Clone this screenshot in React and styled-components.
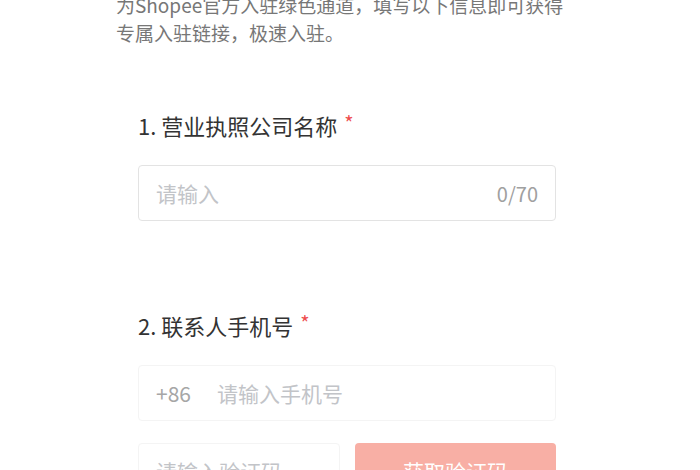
import React, { useState } from 'react';
import styled, { createGlobalStyle } from 'styled-components';

const GlobalStyle = createGlobalStyle`
  html, body {
    margin: 0;
    padding: 0;
    background: #fff;
    font-family: "Noto Sans CJK SC", "Noto Sans", sans-serif;
  }
`;

const Page = styled.div`
  width: 700px;
  height: 470px;
  overflow: hidden;
  padding-left: 116px;
  box-sizing: border-box;
`;

const Intro = styled.div`
  margin-top: -9px;
  font-size: 19px;
  line-height: 28px;
  color: #777;
  white-space: nowrap;
`;

const Form = styled.div`
  margin-top: 63px;
  margin-left: 22px;
  width: 418px;
  display: flex;
  flex-direction: column;
`;

const Field = styled.div`
  display: flex;
  flex-direction: column;
  gap: 25px;
  margin-bottom: ${({ $gap }) => $gap || 0}px;
`;

const Label = styled.div`
  font-size: 22px;
  line-height: 30px;
  color: #333;
  display: flex;
  align-items: center;
  gap: 7px;
`;

const Star = styled.span`
  color: #ee4d4d;
  font-size: 20px;
  line-height: 1;
  margin-top: -4px;
`;

const Box = styled.div`
  height: 56px;
  box-sizing: border-box;
  border: 1px solid ${({ $faint }) => ($faint ? '#f4f4f4' : '#e3e3e3')};
  border-radius: 4px;
  display: flex;
  align-items: center;
  padding: 0 17px;
  gap: 22px;
  flex: 1 1 auto;
  min-width: 0;
`;

const Input = styled.input`
  flex: 1;
  min-width: 0;
  width: 0;
  border: none;
  outline: none;
  background: transparent;
  padding: 0;
  font-family: inherit;
  font-size: 21px;
  color: #333;

  &::placeholder {
    color: #c2c4c8;
  }
`;

const Counter = styled.span`
  font-size: 20px;
  color: #a0a0a0;
`;

const Prefix = styled.span`
  font-size: 21px;
  color: #a6a6a6;
  margin-right: 4px;
`;

const CodeRow = styled.div`
  display: flex;
  gap: 15px;
  margin-top: 22px;
`;

const CodeButton = styled.button`
  width: 201px;
  flex-shrink: 0;
  height: 56px;
  border: none;
  border-radius: 4px;
  background: #f8afa5;
  color: #fff;
  font-family: inherit;
  font-size: 21px;
  cursor: pointer;
`;

export default function App() {
  const [name, setName] = useState('');

  return (
    <>
      <GlobalStyle />
      <Page>
        <Intro>
          <div>为Shopee官方入驻绿色通道，填写以下信息即可获得</div>
          <div>专属入驻链接，极速入驻。</div>
        </Intro>
        <Form>
          <Field $gap={89}>
            <Label>
              1. 营业执照公司名称<Star>*</Star>
            </Label>
            <Box>
              <Input
                placeholder="请输入"
                maxLength={70}
                value={name}
                onChange={(e) => setName(e.target.value)}
              />
              <Counter>{name.length}/70</Counter>
            </Box>
          </Field>
          <Field>
            <Label>
              2. 联系人手机号<Star>*</Star>
            </Label>
            <Box $faint>
              <Prefix>+86</Prefix>
              <Input placeholder="请输入手机号" />
            </Box>
          </Field>
          <CodeRow>
            <Box $faint>
              <Input placeholder="请输入验证码" />
            </Box>
            <CodeButton>获取验证码</CodeButton>
          </CodeRow>
        </Form>
      </Page>
    </>
  );
}
